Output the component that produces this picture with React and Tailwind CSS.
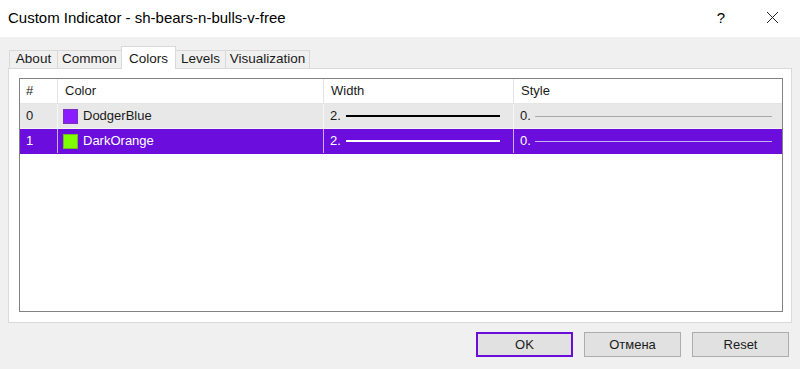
const rows = [
  { id: 0, name: "DodgerBlue", swatch: "bg-[#8a1cff]", width: "2.", style: "0." },
  { id: 1, name: "DarkOrange", swatch: "bg-[#80ff00]", width: "2.", style: "0." },
];

const tabs = [
  { label: "About", w: "w-[49px]" },
  { label: "Common", w: "w-[65px]" },
  { label: "Colors", w: "w-[55px]" },
  { label: "Levels", w: "w-[51px]" },
  { label: "Visualization", w: "w-[85px]" },
];

function Tab({ label, w, active }) {
  if (active) {
    return (
      <div className={`${w} h-[23px] -mb-px -ml-px pt-[2px] bg-white border border-b-0 border-[#d9d9d9] relative z-10 flex justify-center items-start text-[13.5px]`}>
        {label}
      </div>
    );
  }
  return (
    <div className={`${w} h-[18px] bg-[#f0f0f0] border border-b-0 border-[#d9d9d9] -ml-px first:ml-0 flex justify-center items-center text-[13.5px]`}>
      {label}
    </div>
  );
}

export default function App() {
  return (
    <div className="w-[800px] h-[369px] bg-[#f0f0f0] flex flex-col text-[13px] text-[#1a1a1a] font-['Liberation_Sans',Arial,sans-serif] overflow-hidden">
      <div className="h-[37px] bg-white flex items-center justify-between pl-[8px]">
        <span className="text-[15px] text-black">Custom Indicator - sh-bears-n-bulls-v-free</span>
        <div className="flex items-center h-full">
          <span className="text-[15px] text-black w-[58px] text-center">?</span>
          <svg width="46" height="37" viewBox="0 0 46 37" className="mr-[4px]">
            <path d="M17 12 L28 23 M28 12 L17 23" stroke="#222" strokeWidth="1" fill="none" />
          </svg>
        </div>
      </div>

      <div className="px-[8px] pt-[8px]">
        <div className="flex items-end h-[23px] pl-px">
          {tabs.map((t) => (
            <Tab key={t.label} label={t.label} w={t.w} active={t.label === "Colors"} />
          ))}
        </div>
        <div className="h-[255px] bg-white border border-[#d9d9d9] pl-[10px] pr-[8px] pt-[9px] pb-[10px]">
          <div className="h-full border border-[#828282] bg-white flex flex-col">
            <div className="grid grid-cols-[38px_266px_190px_1fr] h-[25px] border-b border-[#e5e5e5]">
              <div className="border-r border-[#e5e5e5] pl-[6px] flex items-center">#</div>
              <div className="border-r border-[#e5e5e5] pl-[7px] flex items-center">Color</div>
              <div className="border-r border-[#e5e5e5] pl-[7px] flex items-center">Width</div>
              <div className="pl-[7px] flex items-center">Style</div>
            </div>
            {rows.map((r) => {
              const sel = r.id === 1;
              return (
                <div
                  key={r.id}
                  className={`grid grid-cols-[38px_266px_190px_1fr] h-[25px] border-b ${
                    sel ? "bg-[#6a0ddd] text-white border-[#6a0ddd]" : "bg-[#e8e8e8] border-[#f4f4f4]"
                  }`}
                >
                  <div className={`pl-[6px] flex items-center border-r ${sel ? "border-[#c9b0f3]" : "border-[#f7f7f7]"}`}>
                    {r.id}
                  </div>
                  <div className={`pl-[5px] flex items-center gap-[5px] border-r ${sel ? "border-[#c9b0f3]" : "border-[#f7f7f7]"}`}>
                    <span className={`w-[15px] h-[15px] ${r.swatch} border border-[#555]/40`} />
                    <span>{r.name}</span>
                  </div>
                  <div className={`pl-[6px] flex items-center border-r ${sel ? "border-[#c9b0f3]" : "border-[#f7f7f7]"}`}>
                    <span className="w-[16px]">{r.width}</span>
                    <span className={`w-[154px] h-[2px] ${sel ? "bg-white" : "bg-black"}`} />
                  </div>
                  <div className="pl-[6px] pr-[10px] flex items-center">
                    <span className="w-[15px]">{r.style}</span>
                    <span className={`flex-1 h-px ${sel ? "bg-[#c8aef5]" : "bg-[#a8a8a8]"}`} />
                  </div>
                </div>
              );
            })}
          </div>
        </div>
      </div>

      <div className="flex justify-end gap-[11px] pr-[11px] pt-[9px]">
        <button className="w-[97px] h-[25px] bg-[#e1e1e1] border-2 border-[#6a0dd8] text-[#1a1a1a]">OK</button>
        <button className="w-[97px] h-[25px] bg-[#e1e1e1] border border-[#adadad] text-[#1a1a1a]">Отмена</button>
        <button className="w-[97px] h-[25px] bg-[#e1e1e1] border border-[#adadad] text-[#1a1a1a]">Reset</button>
      </div>
    </div>
  );
}
